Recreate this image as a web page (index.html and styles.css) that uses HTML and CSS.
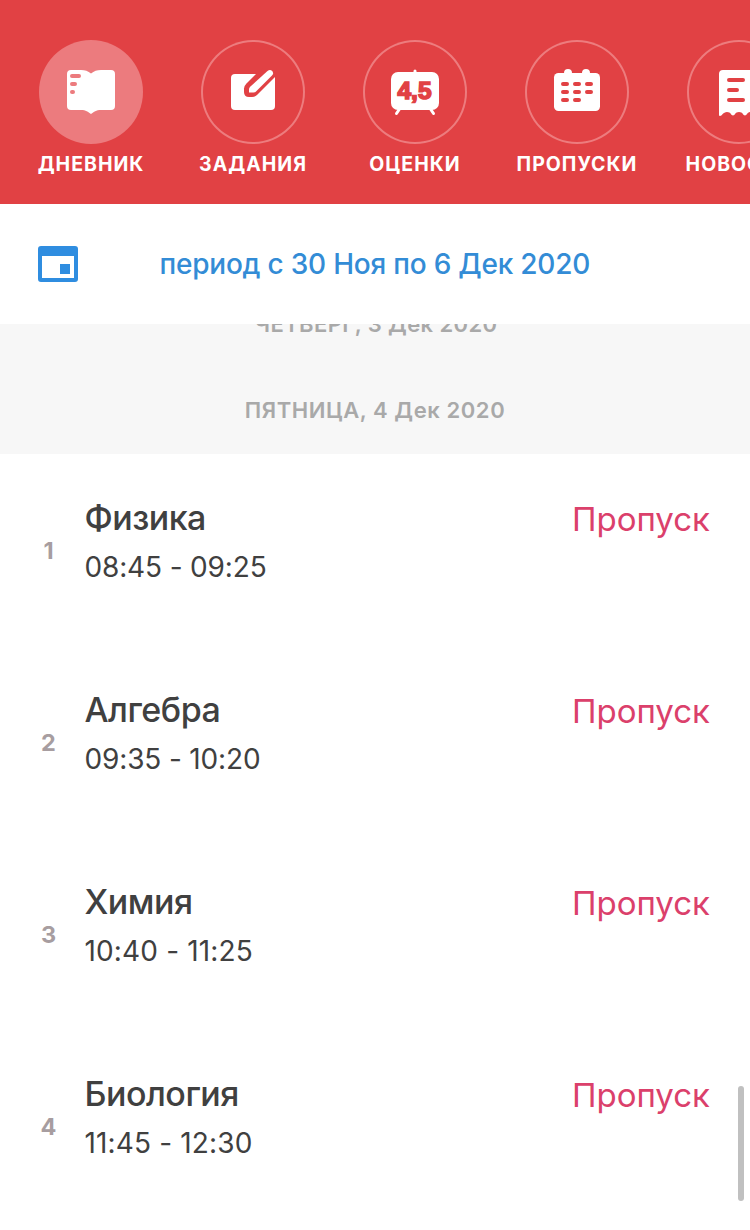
FILE: index.html
```html
<!DOCTYPE html>
<html lang="ru">
<head>
<meta charset="utf-8">
<title>Дневник</title>
<link rel="stylesheet" href="styles.css">
</head>
<body>
<nav class="tabs">
  <a class="tab tab-active"><span class="tab-circle"><svg viewBox="0 0 104 104"><path class="solid" d="M32 30H42C46 30 49 31 52 33.5C55 31 58 30 62 30H72Q76 30 76 34V66Q76 70 72 70H62C57 70 55 72 52 74C49 72 47 70 42 70H32Q28 70 28 66V34Q28 30 32 30Z"/><path class="rose" d="M33 36H40M33 44H36M33 52H34"/></svg></span><span class="tab-label">ДНЕВНИК</span></a>
  <a class="tab"><span class="tab-circle"><svg viewBox="0 0 104 104"><rect class="solid" x="30" y="34" width="44" height="36" rx="4"/><path class="cut" d="M55.5 33.5L45.5 43.5Q43 46 43 48.5V52Q43 57 48 57H51Q54 57 56 55L75.5 35.5V28H62Z"/><path class="solid" d="M66.5 31Q69 29 71.2 31Q73 33.3 71 35.5L55 51.5Q54 52.5 52.5 52.5H48V49.5Q48 48 49.2 46.8Z"/></svg></span><span class="tab-label">ЗАДАНИЯ</span></a>
  <a class="tab"><span class="tab-circle"><svg viewBox="0 0 104 104"><path class="leg" d="M52 31V33M36.5 69L33.5 73.5M67.5 69L70.5 73.5"/><rect class="solid" x="28" y="32" width="48" height="38" rx="7"/><text class="mark" x="34.5" y="59" textLength="34" lengthAdjust="spacingAndGlyphs">4,5</text></svg></span><span class="tab-label">ОЦЕНКИ</span></a>
  <a class="tab"><span class="tab-circle"><svg viewBox="0 0 104 104"><rect class="solid" x="29" y="33" width="46" height="38" rx="4.5"/><path class="ring" d="M43 33V36M61 33V36"/><path class="dash" d="M38 44H42M50 44H54M62 44H66M38 52H42M50 52H54M62 52H66M38 60H42M50 60H54"/></svg></span><span class="tab-label">ПРОПУСКИ</span></a>
  <a class="tab"><span class="tab-circle"><svg viewBox="0 0 104 104"><path class="solid" d="M36 30H68Q72 30 72 34V75Q72 76 71 76C68 76 68 72 64 72S60 75.5 58 75.5S56 72 52 72S48 75.5 46 75.5S44 72 40 72S35 76 33 76Q32 76 32 75V34Q32 30 36 30Z"/><path class="dash" d="M42 40H56M42 50H50M42 60H56"/></svg></span><span class="tab-label">НОВОСТИ</span></a>
</nav>
<header class="period">
  <svg class="period-icon" viewBox="0 0 40 36"><path d="M3 0H37Q40 0 40 3V33Q40 36 37 36H3Q0 36 0 33V3Q0 0 3 0ZM4 10V32H36V10ZM22 18H32V28H22Z"/></svg>
  <span class="period-text">период с 30 Ноя по 6 Дек 2020</span>
</header>
<main class="diary">
  <div class="days">
    <h2 class="day day-past"><span>ЧЕТВЕРГ, 3 Дек 2020</span></h2>
    <h2 class="day"><span>ПЯТНИЦА, 4 Дек 2020</span></h2>
  </div>
  <ol class="lessons">
    <li class="lesson"><span class="num">1</span><div class="info"><div class="subject">Физика</div><div class="time">08:45 - 09:25</div></div><span class="status">Пропуск</span></li>
    <li class="lesson"><span class="num">2</span><div class="info"><div class="subject">Алгебра</div><div class="time">09:35 - 10:20</div></div><span class="status">Пропуск</span></li>
    <li class="lesson"><span class="num">3</span><div class="info"><div class="subject">Химия</div><div class="time time-wide">10:40 - 11:25</div></div><span class="status">Пропуск</span></li>
    <li class="lesson"><span class="num">4</span><div class="info"><div class="subject">Биология</div><div class="time time-wide">11:45 - 12:30</div></div><span class="status">Пропуск</span></li>
  </ol>
  <div class="scroll-thumb"></div>
</main>
</body>
</html>
```
FILE: styles.css
```css
* { box-sizing: border-box; }
body { margin: 0; width: 750px; height: 1230px; overflow: hidden; background: #fff; font-family: Inter, "Noto Sans", sans-serif; position: relative; }
.tabs { display: flex; height: 204px; padding: 40px 0 0 10px; overflow: hidden; background: #e14144; }
.tab { flex: 0 0 162px; display: flex; flex-direction: column; align-items: center; color: #fff; }
.tab-circle { width: 104px; height: 104px; border-radius: 50%; box-shadow: inset 0 0 0 2px #ed7c7e; }
.tab-active .tab-circle { background: #ec7b7e; box-shadow: none; }
.tab-circle svg { display: block; width: 104px; height: 104px; }
.tab-label { margin-top: 8px; line-height: 24px; font-size: 19.5px; font-weight: 700; letter-spacing: 1px; white-space: nowrap; }
.solid { fill: #fff; }
.cut { fill: #e14144; }
.rose, .leg, .ring, .dash { fill: none; stroke-linecap: round; stroke-width: 4; }
.rose { stroke: #ec7b7e; }
.leg { stroke: #fff; stroke-width: 3; }
.ring { stroke: #fff; stroke-width: 8; }
.dash { stroke: #e14144; }
.mark { font: bold 23px "Liberation Sans", Arial, sans-serif; fill: #e14144; stroke: #e14144; stroke-width: 1.5; }
.period { display: flex; align-items: center; height: 120px; padding-left: 38px; }
.period-icon { width: 40px; height: 36px; fill: #2f8de0; }
.period-text { margin-left: 81.5px; font-size: 28px; line-height: 34px; font-weight: 500; letter-spacing: -0.22px; color: #338cd6; white-space: nowrap; }
.days { height: 130px; overflow: hidden; background: #f7f7f7; }
.day { margin: 0; height: 84px; display: flex; align-items: center; justify-content: center; font-size: 22px; font-weight: 600; letter-spacing: 0.58px; color: #a9a9a9; white-space: nowrap; }
.day-past { height: 84px; margin-top: -42px; margin-bottom: 2px; padding-left: 2px; letter-spacing: 0.4px; }
.lessons { margin: 0; padding: 0; list-style: none; }
.lesson { display: flex; height: 192px; padding: 42px 40px 0 40.5px; }
.num { width: 16px; margin-right: 28px; padding-top: 40px; font-size: 23.5px; line-height: 30px; font-weight: 700; text-align: center; color: #a79da0; }
.info { flex: 1; }
.subject { font-size: 34px; line-height: 44px; font-weight: 500; letter-spacing: -0.5px; color: #404040; }
.time { margin-top: 5px; font-size: 28px; line-height: 44px; font-kerning: none; letter-spacing: -0.15px; color: #404040; }
.time-wide { letter-spacing: 0.15px; }
.status { padding-top: 1px; font-size: 33px; line-height: 44px; color: #db406b; }
.scroll-thumb { position: absolute; left: 738px; top: 1086px; width: 6px; height: 115px; border-radius: 3px; background: #c0c0c0; }
```
